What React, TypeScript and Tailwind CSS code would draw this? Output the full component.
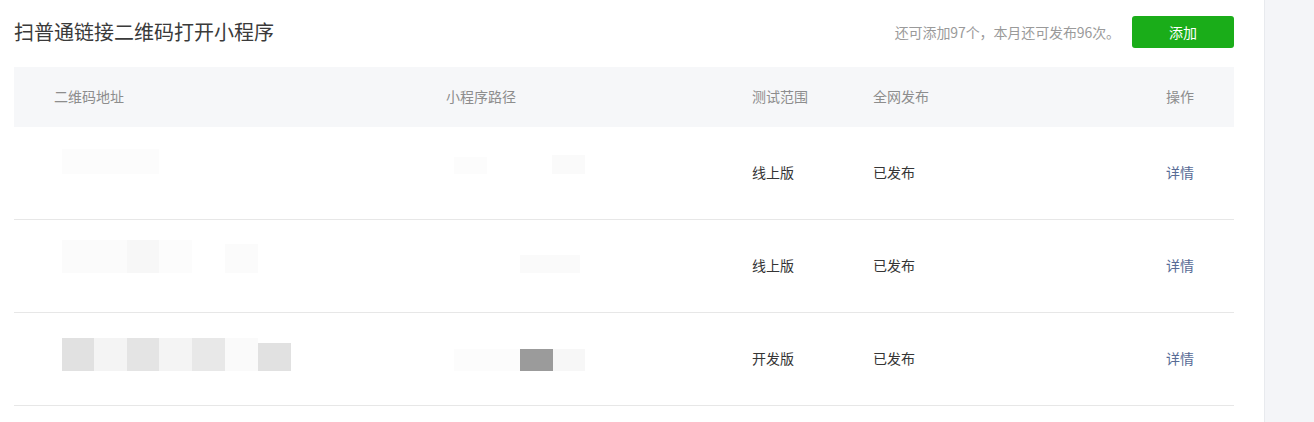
type Block = { w: number; h?: number; color: string };
type Thumb = { mt: number; h: number; blocks: Block[] };

const rows: {
    qr: Thumb;
    path: Thumb;
    range: string;
    status: string;
}[] = [
    {
        qr: { mt: 22, h: 25, blocks: [{ w: 97, color: '#fcfcfc' }] },
        path: {
            mt: 28,
            h: 19,
            blocks: [
                { w: 33, h: 17, color: '#fcfcfc' },
                { w: 65, color: '#ffffff' },
                { w: 33, color: '#fafafa' },
            ],
        },
        range: '线上版',
        status: '已发布',
    },
    {
        qr: {
            mt: 20,
            h: 33,
            blocks: [
                { w: 32, color: '#fbfbfb' },
                { w: 33, color: '#fbfbfb' },
                { w: 32, color: '#f7f7f7' },
                { w: 33, color: '#fcfcfc' },
                { w: 33, color: '#ffffff' },
                { w: 33, h: 29, color: '#fbfbfb' },
            ],
        },
        path: {
            mt: 35,
            h: 18,
            blocks: [
                { w: 66, color: '#ffffff' },
                { w: 60, color: '#fafafa' },
            ],
        },
        range: '线上版',
        status: '已发布',
    },
    {
        qr: {
            mt: 25,
            h: 33,
            blocks: [
                { w: 32, color: '#e1e1e1' },
                { w: 33, color: '#f4f4f4' },
                { w: 32, color: '#e4e4e4' },
                { w: 33, color: '#f4f4f4' },
                { w: 33, color: '#e8e8e8' },
                { w: 33, color: '#fafafa' },
                { w: 33, h: 28, color: '#e1e1e1' },
            ],
        },
        path: {
            mt: 36,
            h: 22,
            blocks: [
                { w: 33, color: '#fcfcfc' },
                { w: 33, color: '#fcfcfc' },
                { w: 33, color: '#9b9b9b' },
                { w: 32, color: '#f7f7f7' },
            ],
        },
        range: '开发版',
        status: '已发布',
    },
];

function Thumbnail({ thumb }: { thumb: Thumb }) {
    return (
        <div
            className="ml-2 flex items-end self-start"
            style={{ marginTop: thumb.mt, height: thumb.h }}
        >
            {thumb.blocks.map((b, i) => (
                <div
                    key={i}
                    style={{
                        width: b.w,
                        height: b.h ?? thumb.h,
                        backgroundColor: b.color,
                    }}
                />
            ))}
        </div>
    );
}

export default function App() {
    return (
        <div
            className="flex h-[422px] w-full bg-white text-[#353535]"
            style={{
                fontFamily:
                    '"Noto Sans CJK SC", "Noto Sans", "Liberation Sans", sans-serif',
            }}
        >
            <div className="w-[1264px] shrink-0 pl-[14px]">
                <div className="flex h-16 w-[1220px] items-center justify-between">
                    <h2 className="text-[20px] font-normal leading-none text-[#3a3a3a]">
                        扫普通链接二维码打开小程序
                    </h2>
                    <div className="flex items-center gap-3">
                        <span className="text-[14px] tracking-[-0.1px] text-[#9a9a9a]">
                            还可添加97个，本月还可发布96次。
                        </span>
                        <button
                            type="button"
                            className="h-8 w-[102px] rounded-[3px] bg-[#1aad19] text-[14px] text-white"
                        >
                            添加
                        </button>
                    </div>
                </div>

                <div className="mt-[3px] w-[1220px]">
                    <div className="grid h-[60px] grid-cols-[392px_306px_121px_293px_108px] items-center bg-[#f6f7f9] pb-0.5 text-[14px] text-[#8d8d8d]">
                        <div className="pl-10">二维码地址</div>
                        <div className="pl-10">小程序路径</div>
                        <div className="pl-10">测试范围</div>
                        <div className="pl-10">全网发布</div>
                        <div className="pl-10">操作</div>
                    </div>

                    {rows.map((row, i) => (
                        <div
                            key={i}
                            className="grid h-[93px] grid-cols-[392px_306px_121px_293px_108px] border-b border-[#e7e7e7] text-[14px]"
                        >
                            <div className="flex pl-10">
                                <Thumbnail thumb={row.qr} />
                            </div>
                            <div className="flex pl-10">
                                <Thumbnail thumb={row.path} />
                            </div>
                            <div className="flex items-center pb-0.5 pl-10">
                                {row.range}
                            </div>
                            <div className="flex items-center pb-0.5 pl-10">
                                {row.status}
                            </div>
                            <div className="flex items-center pb-0.5 pl-10">
                                <a href="#" className="text-[#576b95]">
                                    详情
                                </a>
                            </div>
                        </div>
                    ))}
                </div>
            </div>
            <div className="flex-1 border-l border-[#e8eaee] bg-[#f4f5f8]" />
        </div>
    );
}
